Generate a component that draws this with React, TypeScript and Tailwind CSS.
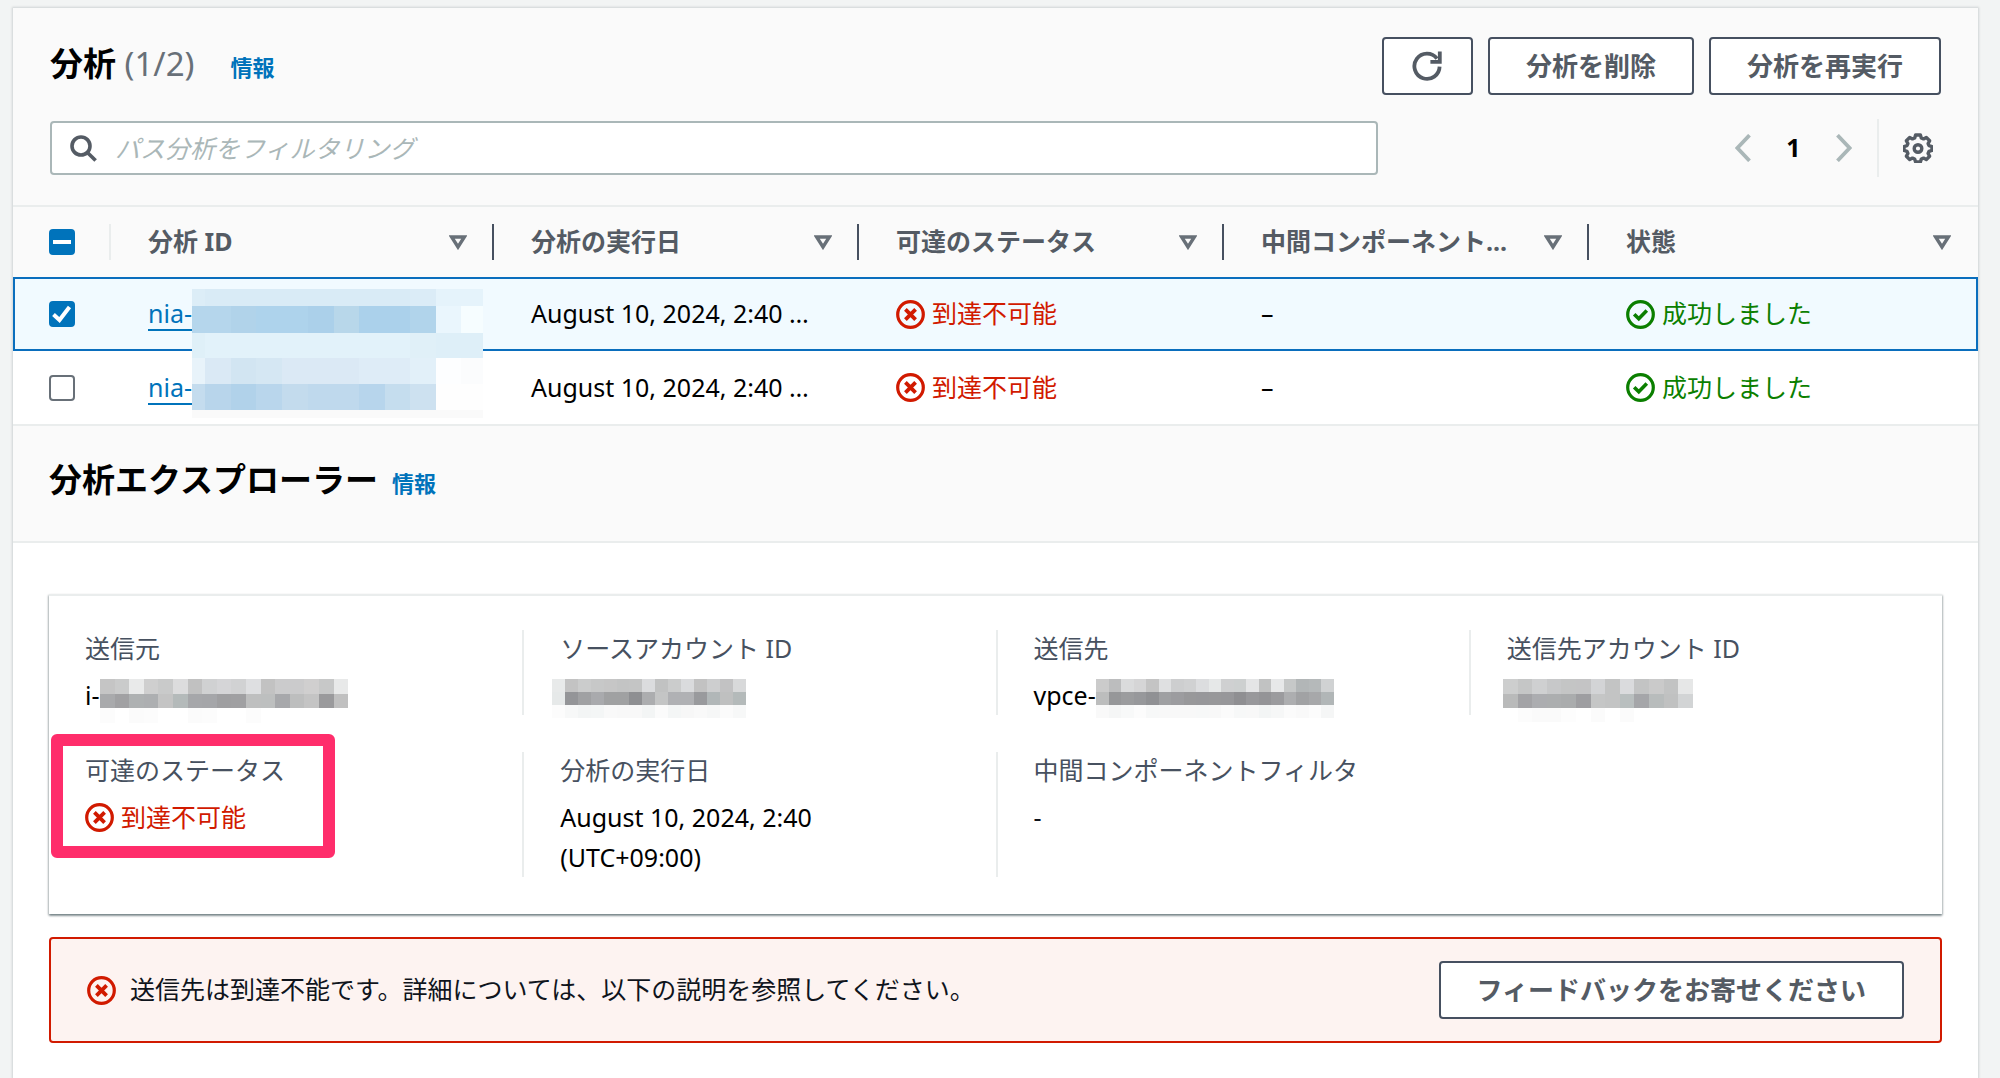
import { useEffect, useRef } from "react";
import type { ReactNode } from "react";

const columns = [
  { label: "分析 ID", width: "w-[383px]" },
  { label: "分析の実行日", width: "w-[365px]" },
  { label: "可達のステータス", width: "w-[365px]" },
  { label: "中間コンポーネント...", width: "w-[365px]" },
  { label: "状態", width: "" },
];

const rows = [
  { id: "nia-", date: "August 10, 2024, 2:40 …", selected: true },
  { id: "nia-", date: "August 10, 2024, 2:40 …", selected: false },
];

type MosaicBand = { y: number; h: number; cells: [number, number, string][] };

// Each cell is [x, width, fill]
const idMosaic: MosaicBand[] = [
  {
    y: 0,
    h: 17,
    cells: [
      [0, 13, "#dcedf7"],
      [13, 205, "#d9ebf6"],
      [218, 26, "#dbecf7"],
      [244, 47, "#e5f3fb"],
    ],
  },
  {
    y: 17,
    h: 27,
    cells: [
      [0, 39, "#b5d6ec"],
      [39, 25, "#b1d3ea"],
      [64, 52, "#aed3ec"],
      [116, 26, "#abd0ea"],
      [142, 25, "#b8d7ea"],
      [167, 51, "#abd1eb"],
      [218, 26, "#b1d4eb"],
      [244, 25, "#eaf6fd"],
      [269, 22, "#f6fdff"],
    ],
  },
  {
    y: 44,
    h: 25,
    cells: [
      [0, 13, "#dff0f8"],
      [13, 205, "#e2f2fa"],
      [218, 26, "#e0f0f8"],
      [244, 47, "#deeff8"],
    ],
  },
  {
    y: 69,
    h: 26,
    cells: [
      [0, 13, "#e8f3fa"],
      [13, 26, "#dae9f5"],
      [39, 25, "#d2e5f2"],
      [64, 26, "#d5e7f3"],
      [90, 77, "#dbe9f5"],
      [167, 51, "#deecf7"],
      [218, 26, "#e2f0f9"],
      [244, 25, "#fdfeff"],
      [269, 22, "#fbfcfd"],
    ],
  },
  {
    y: 95,
    h: 26,
    cells: [
      [0, 13, "#c4dcee"],
      [13, 26, "#b8d5eb"],
      [39, 25, "#b1d2ea"],
      [64, 26, "#b9d6ec"],
      [90, 26, "#c3dbed"],
      [116, 51, "#bfd9ed"],
      [167, 26, "#b7d5ec"],
      [193, 25, "#c5ddee"],
      [218, 26, "#cde1f0"],
      [244, 47, "#fefefe"],
    ],
  },
  { y: 121, h: 8, cells: [[0, 291, "#fafafa"]] },
];

function evenBand(y: number, h: number, size: number, fills: string): MosaicBand {
  return {
    y,
    h,
    cells: fills
      .split(" ")
      .map((fill, i) => [i * size, size, `#${fill}`] as [number, number, string]),
  };
}

const sourceMosaic = [
  evenBand(0, 15, 14.6, "c5c5c5 cacbcb e9eaea cfcfcf c9caca dcdcdd c1c1c1 d0d1d2 d5d5d7 d1d2d3 dedfe1 c2c2c2 cbcbcc cbcbcc d0cfcf c7c8c8 e8e9e9"),
  evenBand(15, 14, 14.6, "a9aaac a1a1a3 aeb1b2 adafb1 c4c4c4 b4baba a6a7aa a5a6a9 9f9fa1 a0a0a2 bebfbf bdbfbf a7a8ab bdbebe c4c4c4 9a9a9c c0c0c0"),
  evenBand(29, 15, 14.6, "fcfcfc ffffff fbfbfb fcfcfc ffffff ffffff fbfbfb fcfcfc ffffff ffffff fcfcfc"),
];

const accountMosaic = [
  evenBand(0, 13, 12.9, "e8eaea c3c3c3 cbcccc c7c8c8 c6c6c6 c3c4c4 c4c5c5 dbdcde c1c2c2 cbcccc dadbdd c2c2c2 cdcecf c2c2c3 d8d9da"),
  evenBand(13, 13, 12.9, "e6e9e9 949598 a0a1a3 a9aaad a0a1a2 a0a1a2 8e8f92 acadaf c4c5c5 b0b1b4 b0b1b4 999a9d b1b7b8 bfc0c0 b4baba"),
  evenBand(26, 13, 12.9, "fcfcfc f7f8f8 f3f5f5 f4f6f6 f9f9f9 f8f8f8 f8f8f8 f3f5f5 fbfbfb f4f6f6 f7f7f7 f9f9f9 f6f7f7 fbfbfb f7f8f8"),
];

const targetMosaic = [
  evenBand(0, 13, 12.5, "cbcbcb bcbdbe dadbdc d5d5d6 c4c4c4 dfe0e1 cdcecf d0d1d2 dcdddf e6e8e8 cfd0d1 cdd0d0 e4e5e6 c1c2c2 e7e8e9 c6c8c8 b2b6b7 b5b9ba d0d2d3"),
  evenBand(13, 13, 12.5, "bcbdbd 969799 9b9c9e 97989b 909194 9fa0a2 9c9c9f 98989a 97979a 98989a 97979a 8f8f92 98989b 949497 9b9b9e adaeb0 a1a2a4 a7a8aa b1b6b7"),
  evenBand(26, 13, 12.5, "f9f9f9 f5f6f6 f8f9f9 fcfcfc f7f8f8 f8f8f8 f8f8f8 f8f8f8 f7f8f8 f8f8f8 fbfbfb f7f8f8 f8f8f8 f3f5f5 f6f7f7 fbfbfb f9f9f9 fcfcfc f5f6f6"),
];

const targetAccountMosaic = [
  evenBand(0, 15, 14.6, "cdcece c5c6c6 cfd0d1 c7c8c9 c4c5c5 c4c4c5 d3d4d6 c3c4c4 dadbdd c3c4c4 cacaca c2c3c3 e6e7e7"),
  evenBand(15, 14, 14.6, "b9baba a3a3a6 acadb0 acaeaf aaacad 9e9ea1 c5c6c6 c3c4c4 b9bfbf a5a6a9 b8bcbc c0c1c1 d2d4d5"),
  evenBand(29, 14, 14.6, "ffffff fcfcfc fafafa fafafa fdfdfd ffffff fbfbfb ffffff fbfbfb"),
];

function Mosaic({
  bands,
  width,
  height,
  className = "",
}: {
  bands: MosaicBand[];
  width: number;
  height: number;
  className?: string;
}) {
  return (
    <svg
      width={width}
      height={height}
      shapeRendering="crispEdges"
      className={className}
      aria-hidden="true"
    >
      {bands.map((band) =>
        band.cells.map(([x, w, fill]) => (
          <rect key={`${band.y}-${x}`} x={x} y={band.y} width={w} height={band.h} fill={fill} />
        ))
      )}
    </svg>
  );
}

function ErrorIcon() {
  return (
    <svg viewBox="0 0 29 29" className="size-[29px] shrink-0" fill="none" stroke="#d11a00">
      <circle cx="14.5" cy="14.5" r="12.8" strokeWidth="3.2" />
      <path d="M9.4 9.4l10.2 10.2M19.6 9.4L9.4 19.6" strokeWidth="3.8" />
    </svg>
  );
}

function SuccessIcon() {
  return (
    <svg viewBox="0 0 29 29" className="size-[29px] shrink-0" fill="none" stroke="#0b7f00">
      <circle cx="14.5" cy="14.5" r="12.8" strokeWidth="3.2" />
      <path d="M8.2 14.2l4.6 4.6 8-8.2" strokeWidth="3.6" />
    </svg>
  );
}

function Unreachable() {
  return (
    <span className="flex items-center gap-[7px] text-[#d11a00]">
      <ErrorIcon />
      到達不可能
    </span>
  );
}

function CheckBox({
  label,
  checked = false,
  mixed = false,
}: {
  label: string;
  checked?: boolean;
  mixed?: boolean;
}) {
  const ref = useRef<HTMLInputElement>(null);

  useEffect(() => {
    if (ref.current) ref.current.indeterminate = mixed;
  }, [mixed]);

  return (
    <span className="relative block size-[26px]">
      <input
        ref={ref}
        type="checkbox"
        aria-label={label}
        defaultChecked={checked}
        className="block size-[26px] appearance-none rounded-[4px] border-2 border-[#687078] bg-white checked:border-[#0073bb] checked:bg-[#0073bb] indeterminate:border-[#0073bb] indeterminate:bg-[#0073bb]"
      />
      <svg
        viewBox="0 0 26 26"
        className="pointer-events-none absolute inset-0"
        fill="none"
        stroke="#fff"
        strokeWidth="4"
      >
        {mixed && <path d="M4 13h18" />}
        {checked && <path d="M4.5 13.5l6 5.5L20.5 6" />}
      </svg>
    </span>
  );
}

function Button({ children }: { children: ReactNode }) {
  return (
    <button className="h-[58px] rounded-[4px] border-2 border-[#465060] bg-white px-9 text-[26px] font-bold text-[#545b64]">
      {children}
    </button>
  );
}

function Detail({
  label,
  divider = false,
  children,
}: {
  label: string;
  divider?: boolean;
  children?: ReactNode;
}) {
  return (
    <div className={`relative pl-9 ${divider ? "border-l-2 border-[#eaeded]" : ""}`}>
      <dt className="mb-[9px] leading-9 text-[#475160]">{label}</dt>
      <dd className="min-h-10 leading-10">{children}</dd>
    </div>
  );
}

export default function App() {
  return (
    <div
      lang="ja"
      className="flex min-h-screen bg-[#f2f4f4] pt-2 pr-[22px] pl-[13px] text-[25px] text-[#0f141c] font-['Noto_Sans','Noto_Sans_CJK_JP',sans-serif]"
    >
      <main className="min-w-0 flex-1 bg-white shadow-[0_0_2px_1px_#cfd4d5]">
        {/* Header and filter bar */}
        <header className="border-b-2 border-[#eaeded] bg-[#fafafa] px-[37px] pt-[29px] pb-7">
          <div className="flex items-start justify-between">
            <div className="flex items-baseline">
              <h2 className="text-[33px] leading-[54px] font-bold text-black">
                分析 <span className="font-normal text-[#687078]">(1/2)</span>
              </h2>
              <a href="#info" className="ml-9 text-[22px] font-bold text-[#0073bb]">
                情報
              </a>
            </div>
            <div className="flex gap-[15px]">
              <button
                aria-label="更新"
                className="flex h-[58px] w-[91px] items-center justify-center rounded-[4px] border-2 border-[#465060] bg-white"
              >
                <svg viewBox="0 0 30 30" className="size-[30px]" fill="none" stroke="#545b64" strokeWidth="3.8">
                  <path d="M27.6 15.6A12.6 12.6 0 1 1 25 7.6" />
                  <path d="M27.8 .6v10.2H18.4" />
                </svg>
              </button>
              <Button>分析を削除</Button>
              <Button>分析を再実行</Button>
            </div>
          </div>

          <div className="mt-6 flex items-center">
            <label className="flex h-[58px] min-w-0 flex-1 items-center">
              <span className="flex h-[54px] w-full max-w-[1328px] items-center rounded-[4px] border-2 border-[#aab7b8] bg-white pl-[18px]">
                <svg viewBox="0 0 27 27" className="size-[27px] shrink-0" fill="none" stroke="#545b64" strokeWidth="3.6">
                  <circle cx="11" cy="11" r="9" />
                  <path d="M17.4 17.4l8.2 8.2" />
                </svg>
                <input
                  type="text"
                  aria-label="パス分析をフィルタリング"
                  placeholder="パス分析をフィルタリング"
                  className="h-full min-w-0 flex-1 px-[18px] outline-none placeholder:text-[#aab7b8] placeholder:italic"
                />
              </span>
            </label>
            <nav className="flex items-center" aria-label="ページ">
              <button aria-label="前のページ" className="p-2">
                <svg viewBox="0 0 16 28" className="h-7 w-4" fill="none" stroke="#aab7b8" strokeWidth="3.8">
                  <path d="M14.5 1.2L2.4 14l12.1 12.8" />
                </svg>
              </button>
              <button className="w-[69px] text-center font-bold text-black">1</button>
              <button aria-label="次のページ" className="p-2">
                <svg viewBox="0 0 16 28" className="h-7 w-4" fill="none" stroke="#aab7b8" strokeWidth="3.8">
                  <path d="M1.5 1.2L13.6 14 1.5 26.8" />
                </svg>
              </button>
            </nav>
            <span className="ml-[17px] h-[58px] w-0.5 bg-[#eaeded]" />
            <button aria-label="設定" className="mr-2 ml-6">
              <svg viewBox="0 0 30 30" className="size-[30px]" fill="none" stroke="#545b64" strokeWidth="3.4">
                <path
                  strokeLinejoin="round"
                  d="M12.6 2h4.8l.9 3 2.2.9 2.8-1.5 3.3 3.4-1.5 2.7.9 2.2 3 .9v3.8l-3 .9-.9 2.2 1.5 2.7-3.3 3.4-2.8-1.5-2.2.9-.9 2.9h-4.8l-.9-2.9-2.2-.9-2.8 1.5-3.3-3.4 1.5-2.7-.9-2.2-3-.9v-3.8l3-.9.9-2.2-1.5-2.7 3.3-3.4 2.8 1.5 2.2-.9z"
                />
                <circle cx="15" cy="15.5" r="3.8" />
              </svg>
            </button>
          </div>
        </header>

        {/* Analyses */}
        <table className="w-full table-fixed border-b-2 border-[#eaeded] text-left">
          <thead className="bg-[#fafafa] text-[#545b64]">
            <tr className="h-[70px]">
              <th className="w-[98px] p-0">
                <div className="flex h-9 items-center border-r-2 border-[#eaeded] pl-9">
                  <CheckBox label="すべて選択" mixed />
                </div>
              </th>
              {columns.map((column, i) => (
                <th key={column.label} className={`p-0 ${column.width}`}>
                  <div
                    className={`flex h-9 items-center justify-between pl-[37px] ${
                      i < columns.length - 1 ? "border-r-2 border-[#465060] pr-[25px]" : "pr-[27px]"
                    }`}
                  >
                    <span className="truncate">{column.label}</span>
                    <button aria-label={`${column.label} 並べ替え`}>
                      <svg viewBox="0 0 18 15" className="h-[15px] w-[18px]" fill="none" stroke="#687078" strokeWidth="3.4">
                        <path d="M2.6 2h12.8L9 12z" />
                      </svg>
                    </button>
                  </div>
                </th>
              ))}
            </tr>
          </thead>
          <tbody>
            {rows.map((row, i) => (
              <tr
                key={i}
                className={`h-[74px] ${
                  row.selected ? "bg-[#f1faff] outline-2 -outline-offset-2 outline-[#0a6ebd]" : ""
                }`}
              >
                <td className="p-0 pl-9">
                  <CheckBox label={`${row.id} を選択`} checked={row.selected} />
                </td>
                <td className="relative p-0 pl-[37px]">
                  <a
                    href="#analysis"
                    className="text-[#0073bb] underline decoration-2 underline-offset-[6px]"
                  >
                    {row.id}
                  </a>
                  {i === 0 && (
                    <Mosaic
                      bands={idMosaic}
                      width={291}
                      height={129}
                      className="absolute top-3 left-[81px] z-10"
                    />
                  )}
                </td>
                <td className="truncate p-0 pl-[37px] text-black">{row.date}</td>
                <td className="p-0 pl-[37px]">
                  <Unreachable />
                </td>
                <td className="p-0 pl-[37px] text-black">–</td>
                <td className="p-0 pl-[37px]">
                  <span className="flex items-center gap-[7px] text-[#0b7f00]">
                    <SuccessIcon />
                    成功しました
                  </span>
                </td>
              </tr>
            ))}
          </tbody>
        </table>

        {/* Explorer */}
        <section>
          <header className="flex items-baseline border-b-2 border-[#eaeded] bg-[#fafafa] px-9 pt-[27px] pb-[34px]">
            <h2 className="text-[33px] leading-[54px] font-bold text-black">分析エクスプローラー</h2>
            <a href="#explorer-info" className="ml-[14px] text-[22px] font-bold text-[#0073bb]">
              情報
            </a>
          </header>

          <div className="px-9 pt-[51px]">
            <dl className="grid grid-cols-4 gap-y-[37px] border-t-2 border-[#eaeded] pt-[34px] pb-[37px] shadow-[0_2px_2px_0_rgba(0,28,36,0.35),1px_1px_2px_0_rgba(0,28,36,0.2),-1px_1px_2px_0_rgba(0,28,36,0.2)]">
              <Detail label="送信元">
                <span className="flex text-black">
                  i-
                  <Mosaic bands={sourceMosaic} width={248} height={44} className="relative top-1 -mb-4" />
                </span>
              </Detail>
              <Detail label="ソースアカウント ID" divider>
                <Mosaic bands={accountMosaic} width={194} height={39} className="relative top-1 -ml-2" />
              </Detail>
              <Detail label="送信先" divider>
                <span className="flex text-black">
                  vpce-
                  <Mosaic bands={targetMosaic} width={238} height={39} className="relative top-1" />
                </span>
              </Detail>
              <Detail label="送信先アカウント ID" divider>
                <Mosaic bands={targetAccountMosaic} width={190} height={44} className="relative top-1 -mb-4 -ml-1" />
              </Detail>
              <Detail label="可達のステータス">
                <span className="flex h-10 items-center">
                  <Unreachable />
                </span>
                {/* Callout around the reachability status */}
                <span className="pointer-events-none absolute -top-[18px] left-0.5 h-[124px] w-[284px] rounded-[6px] border-[12px] border-[#ff2d6b]" />
              </Detail>
              <Detail label="分析の実行日" divider>
                <span className="text-black">
                  August 10, 2024, 2:40
                  <br />
                  (UTC+09:00)
                </span>
              </Detail>
              <Detail label="中間コンポーネントフィルタ" divider>
                -
              </Detail>
            </dl>

            <div
              role="alert"
              className="mt-[23px] flex items-center gap-[14px] rounded-[4px] border-2 border-[#d11a00] bg-[#fdf3f1] px-9 py-[22px]"
            >
              <ErrorIcon />
              <p className="flex-1">
                送信先は到達不能です。詳細については、以下の説明を参照してください。
              </p>
              <Button>フィードバックをお寄せください</Button>
            </div>
          </div>
        </section>
      </main>
    </div>
  );
}
